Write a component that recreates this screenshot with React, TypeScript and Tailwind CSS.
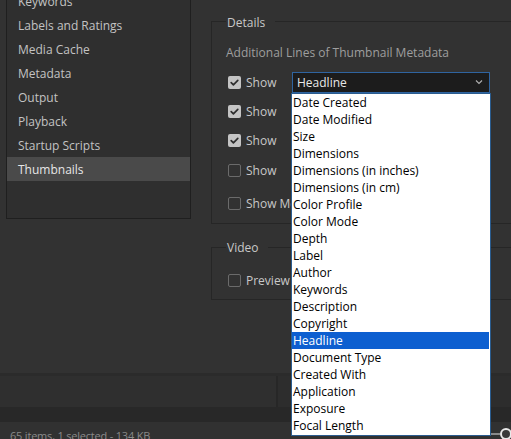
import React from "react";

const sidebar = [
  "Keywords",
  "Labels and Ratings",
  "Media Cache",
  "Metadata",
  "Output",
  "Playback",
  "Startup Scripts",
  "Thumbnails",
];

const options = [
  "Date Created",
  "Date Modified",
  "Size",
  "Dimensions",
  "Dimensions (in inches)",
  "Dimensions (in cm)",
  "Color Profile",
  "Color Mode",
  "Depth",
  "Label",
  "Author",
  "Keywords",
  "Description",
  "Copyright",
  "Headline",
  "Document Type",
  "Created With",
  "Application",
  "Exposure",
  "Focal Length",
];

function Check({ checked }: { checked: boolean }) {
  if (checked) {
    return (
      <div className="w-[13px] h-[13px] rounded-[2px] bg-[#c4c4c4] flex items-center justify-center shrink-0">
        <svg width="13" height="13" viewBox="0 0 13 13">
          <path d="M3.2 6.6 L5.4 8.8 L9.8 4.4" fill="none" stroke="#2e2e2e" strokeWidth="1.7" strokeLinecap="round" strokeLinejoin="round" />
        </svg>
      </div>
    );
  }
  return <div className="w-[13px] h-[13px] rounded-[2px] border border-[#6b6b6b] shrink-0" />;
}

function Row({ checked, label, children, extra }: { checked: boolean; label: string; children?: React.ReactNode; extra?: string }) {
  return (
    <div className={`flex items-center h-[22px] pl-[2px] ${extra ?? ""}`}>
      <Check checked={checked} />
      <span className="ml-[5px] w-[46px] shrink-0 whitespace-nowrap text-[#c8c8c8] pt-[1px]">{label}</span>
      {children}
    </div>
  );
}

export default function App() {
  return (
    <div
      className="relative w-[511px] h-[439px] overflow-hidden bg-[#323232] text-[12px] leading-[16px] flex flex-col"
      style={{ fontFamily: '"Open Sans", "Noto Sans", sans-serif' }}
    >
      <div className="flex h-[373px] shrink-0">
        <div className="w-[211px] shrink-0 pl-[6px]">
          <div className="w-[185px] h-[231px] -mt-[12px] border border-[#1f1f1f] bg-[#2f2f2f]">
            {sidebar.map((s) => (
              <div
                key={s}
                className={`h-[24px] flex items-center pl-[11px] pt-[2px] ${
                  s === "Thumbnails" ? "bg-[#4a4a4a] text-[#e6e6e6]" : "text-[#c3c3c3]"
                }`}
              >
                {s}
              </div>
            ))}
          </div>
        </div>
        <div className="flex-1 min-w-0">
          <fieldset className="mt-[13px] w-[330px] h-[211px] border border-[#262626] pl-[14px]">
            <legend className="pl-[1px] pr-[10px] text-[#c8c8c8] leading-[16px]">
              <span className="relative top-[2px]">Details</span>
            </legend>
            <div className="mt-[16px] text-[#9e9e9e]">Additional Lines of Thumbnail Metadata</div>
            <div className="mt-[10px] flex flex-col gap-[7px]">
              <Row checked label="Show">
                <div className="w-[198px] h-[21px] border border-[#2f64a0] bg-[#1c1c1c] flex items-center pl-[4px] pr-[6px] text-[#e8e8e8]">
                  <span className="flex-1 pt-[1px]">Headline</span>
                  <svg width="8" height="6" viewBox="0 0 8 6">
                    <path d="M1 1.5 L4 4.5 L7 1.5" fill="none" stroke="#b0b0b0" strokeWidth="1.1" />
                  </svg>
                </div>
              </Row>
              <Row checked label="Show" />
              <Row checked label="Show" />
              <Row checked={false} label="Show" extra="mt-[1px]" />
              <Row checked={false} label="Show Metadata Placard" extra="mt-[4px]" />
            </div>
          </fieldset>
          <fieldset className="mt-[15px] w-[330px] h-[61px] border border-[#262626] pl-[14px]">
            <legend className="pl-[1px] pr-[10px] text-[#c8c8c8] leading-[16px]">
              <span className="relative top-[1px]">Video</span>
            </legend>
            <div className="mt-[14px] flex items-center h-[22px] pl-[2px]">
              <Check checked={false} />
              <span className="ml-[5px] whitespace-nowrap text-[#c8c8c8] pt-[1px]">Preview Video Thumbnails</span>
            </div>
          </fieldset>
        </div>
      </div>
      <div className="h-[34px] shrink-0 flex bg-[#2f2f2f] border-t-[3px] border-[#2b2b2b]">
        <div className="w-[278px] border-r-[2px] border-[#272727]" />
        <div className="flex-1 bg-[#2d2d2d]" />
      </div>
      <div className="h-[15px] shrink-0 bg-[#282828]" />
      <div className="flex-1 flex items-start pt-[6px] pl-[10px] text-[11px] tracking-[-0.2px] text-[#8a8a8a] bg-[#313131]">
        <span className="flex-1">65 items, 1 selected - 134 KB</span>
        <div className="flex items-center">
          <div className="w-[12px] h-[2px] bg-[#8a8a8a]" />
          <div className="w-[12px] h-[12px] rounded-full border-[2px] border-[#e8e8e8] bg-[#3a3a3a] mr-[-1px]" />
        </div>
      </div>

      <div className="absolute left-[291px] top-[93px] w-[200px] h-[343px] border border-[#2a5c8f] bg-white">
        {options.map((o) => (
          <div
            key={o}
            className={`h-[17px] flex items-center pl-[1px] mr-[1px] whitespace-nowrap ${
              o === "Headline" ? "bg-[#0d5fd0] text-white" : "text-black"
            }`}
          >
            {o}
          </div>
        ))}
      </div>
    </div>
  );
}
